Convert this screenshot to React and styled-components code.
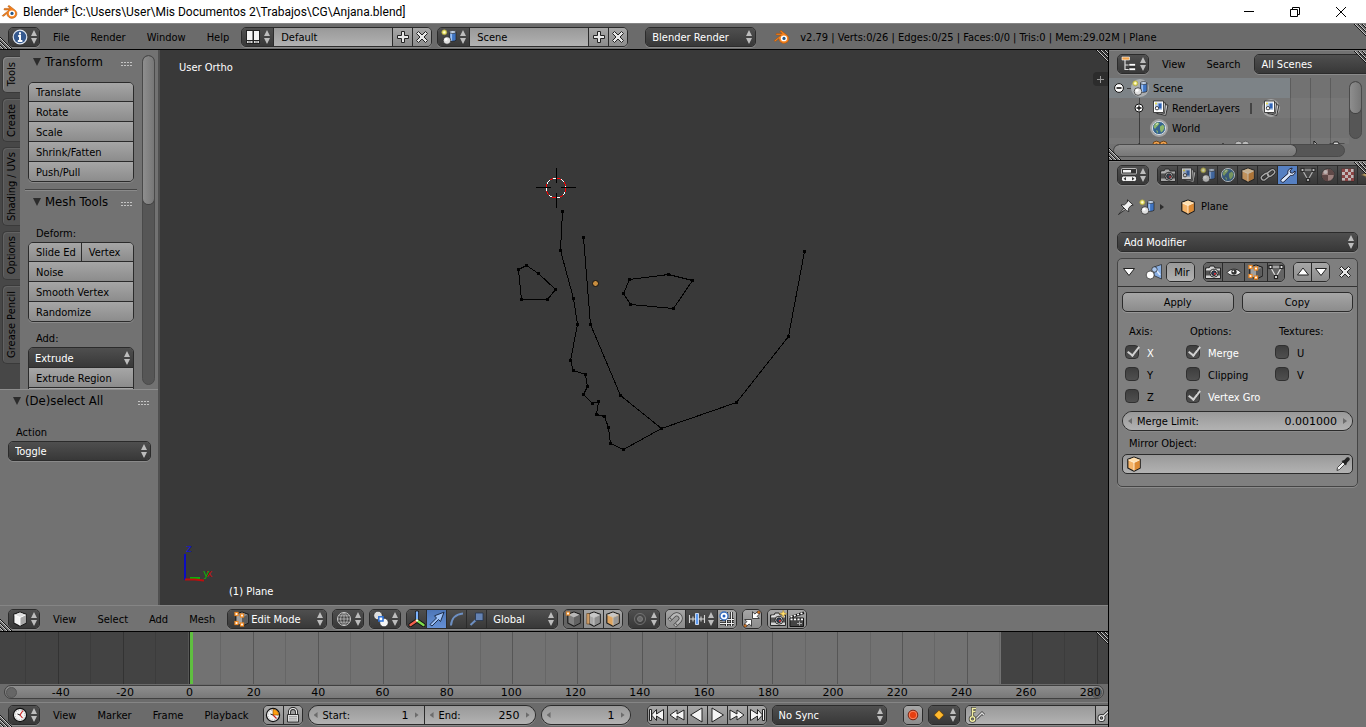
import React from 'react';
import styled, { createGlobalStyle, css } from 'styled-components';

const ui = '"DejaVu Sans Condensed", "DejaVu Sans", sans-serif';
const digits = '"DejaVu Sans", sans-serif';

const colors = {
  region: '#727272',
  header: '#6b6b6b',
  viewport: '#393939',
  outline: '#2b2b2b',
  active: '#5680c2',
};

const dark = css`
  background: linear-gradient(#4f4f4f, #383838);
  color: #fff;
`;

const light = css`
  background: linear-gradient(#a6a6a6, #8c8c8c);
  color: #000;
`;

const field = css`
  background: linear-gradient(#999, #b2b2b2);
  color: #000;
`;

const GlobalStyle = createGlobalStyle`
  * {
    box-sizing: border-box;
  }

  body {
    margin: 0;
    overflow: hidden;
    background: ${colors.region};
    font: 11px/16px ${ui};
    color: #000;
  }

  button, input, select {
    margin: 0;
    padding: 0;
    border: 0;
    border-radius: 0;
    background: none;
    font: inherit;
    color: inherit;
    outline: none;
  }
`;

const Svg = styled.svg`
  display: block;
  flex: none;
  overflow: visible;
  opacity: ${(p) => (p.$dim ? 0.7 : 1)};
`;

const cube = (front, side, top, edge = 'none') => (
  <g strokeLinejoin="round">
    <path d="M8 1 14.2 3.400V12L8 15.200 1.800 12V3.400z" fill={front} stroke="#1c1c1c" strokeWidth="1.200" />
    <path d="M8 1.600 13.600 3.700 8 6.400 2.400 3.700z" fill={top} />
    <path d="M13.600 3.700 8 6.400v8.200l5.600-2.900z" fill={side} />
    <path d="M2.400 3.900 8 6.500l5.600-2.600M8 6.500v8" fill="none" stroke={edge} strokeWidth=".9" />
  </g>
);

const handles = (points, color = '#f08a24') => points.map(([x, y]) => (
  <rect key={`${x}-${y}`} x={x - 1.5} y={y - 1.5} width="3" height="3" fill="#fff" stroke={color} strokeWidth="1.2" />
));

const layers = (
  <g stroke="#222" strokeWidth=".8">
    <path d="M6 4h9v10.5H6z" fill="#cfcfcf" transform="rotate(12 10 9)" />
    <path d="M4 2.5h9V13H4z" fill="#ddd" transform="rotate(5 8 8)" />
    <path d="M1.5 1h10v11.5h-10z" fill="#fff" />
    <path d="M3 2.5h7V10H3z" fill="#b8cdea" stroke="none" />
    <path d="M6.5 3.5h3v5h-3z" fill="#2f62b5" stroke="none" />
    <circle cx="5" cy="8.2" r="1.7" fill="#fff" />
    <circle cx="4" cy="3.5" r="1" fill="#f0e040" stroke="none" />
  </g>
);

const camera = (
  <g stroke="#181818" strokeWidth=".9">
    <path d="M.5 4H4l1-2h4l1 2h5.500v10.500H.5z" fill="#d2d2d2" />
    <path d="M1 6.500h14v5H1z" fill="#555" stroke="none" />
    <circle cx="9" cy="9.200" r="4" fill="#ececec" />
    <circle cx="9" cy="9.200" r="2.400" fill="#30405a" />
    <circle cx="10" cy="9.800" r="1.100" fill="#d33" stroke="none" />
    <path d="M2 5h2.500" stroke="#fff" />
  </g>
);

const clock = (slice) => (
  <g>
    <circle cx="8" cy="8" r="6.6" fill="#f4f4f4" stroke="#111" strokeWidth="1.2" />
    <circle cx="8" cy="8" r="4.9" fill="none" stroke="#aaa" strokeDasharray="1 1.57" />
    {slice && <path d="M8 8V2.200A5.800 5.800 0 0 1 13.800 8z" fill="#ff9f0f" stroke="#7a4300" strokeWidth=".6" />}
    <path d={slice ? 'M8 8l3.500 3.500' : 'M11 3.500 8 8l2.500 3'} stroke="#c22" strokeWidth="1.1" fill="none" />
    <path d="M8 8 5.500 7" stroke="#222" />
  </g>
);

const transport = (d) => <path d={d} fill="#f4f4f4" stroke="#222" strokeWidth="1" strokeLinejoin="round" />;

const glyphs = {
  blender: (
    <g>
      <path d="M.6 11.2 7.2 6H2.800c-1.200 0-1.200-1.600 0-1.600h5.400L6.400 3c-.9-.8.1-1.900 1.100-1.200l6 4.600a5 4.700 0 1 1-8.600 3.200l-2.800 2.300c-1 .8-2.400 0-1.500-.7z" fill="#f5821f" stroke="#a64c00" strokeWidth=".5" />
      <ellipse cx="9.900" cy="9.400" rx="3.100" ry="2.800" fill="#fff" />
      <circle cx="10" cy="9.400" r="1.600" fill="#265787" />
    </g>
  ),
  info: (
    <g>
      <circle cx="8" cy="8" r="6.800" fill="#35598f" stroke="#dfe7f2" strokeWidth="1.200" />
      <path d="M8 3.200v2.200M6.200 7H8v5M5.800 12h4.600" stroke="#fff" strokeWidth="2" fill="none" />
    </g>
  ),
  layout: (
    <g>
      <path d="M1 1h14v14H1z" fill="#222" />
      <path d="M2 2h5.500v9H2zM9 2h5v9H9z" fill="#f4f4f4" />
      <path d="M2 12h5.500v2H2zM9 12h5v2H9z" fill="#d8d8d8" />
      <path d="M3 13h3M10 13h3" stroke="#555" strokeWidth=".8" />
    </g>
  ),
  scene: (
    <g stroke="#222" strokeWidth=".7">
      <path d="M8.500 3v8.500c1.500 1.200 4.700 1 6.500-.2V3z" fill="#3f75c4" />
      <path d="M10.200 4v8" stroke="#9cc0f2" strokeWidth="1.800" />
      <ellipse cx="11.700" cy="3" rx="3.300" ry="1.400" fill="#cfe0f7" />
      <circle cx="6" cy="11.500" r="3.800" fill="#e0e0e0" />
      <circle cx="5" cy="10.300" r="1.500" fill="#fff" stroke="none" />
      <circle cx="3.300" cy="3.300" r="2.500" fill="#e9e36a" stroke="#a49c40" />
      <circle cx="3.300" cy="3.300" r="1.100" fill="#fffde0" stroke="none" />
    </g>
  ),
  plus: <path d="M6.500 2.500h3v4h4v3h-4v4h-3v-4h-4v-3h4z" fill="#e8e8e8" stroke="#222" />,
  close: <path d="m2.500 4.500 2-2L8 6l3.500-3.500 2 2L10 8l3.500 3.500-2 2L8 10l-3.500 3.500-2-2L6 8z" fill="#e8e8e8" stroke="#222" />,
  outliner: (
    <g>
      <path d="M4 4v9.500h5M4 9h5" stroke="#ddd" strokeWidth="1.200" fill="none" />
      <path d="M1 1h7.500v3H1z" fill="#f0a24a" stroke="#fff" strokeWidth=".6" />
      <path d="M8 7.500h6.500V10H8zM8 12h6.500v2.500H8z" fill="#fff" stroke="#111" strokeWidth=".5" />
    </g>
  ),
  properties: (
    <g fill="#f2f2f2" stroke="#111" strokeWidth=".7">
      <rect x=".5" y="1.500" width="15" height="5.500" rx="1" fill="#333" stroke="#eee" />
      <path d="M2 3h8v2.500H2z" stroke="none" />
      <rect x=".5" y="9" width="15" height="5.500" rx="2" />
      <path d="m5 10-2.500 1.700L5 13.400zM11 10l2.500 1.700-2.500 1.700z" fill="#333" stroke="none" />
    </g>
  ),
  layers,
  camera,
  world: (
    <g>
      <circle cx="8" cy="8" r="6.600" fill="#35648f" stroke="#d5dde6" strokeWidth="1" />
      <path d="M4 3.500c2-1.500 4-1 4.500 0L7 5.500 5.500 7 4 9 2.500 7zM9 6.500l3-2 1.700 3L12 11l-2 1.500L9 9.500zM5 10l2 1-.5 2.500z" fill="#8db76c" />
      <path d="M5 4.500 7 3.500" stroke="#dfeccf" />
    </g>
  ),
  object: cube('#f5b469', '#dc8a34', '#ffdfae', '#fff3df'),
  view3d: cube('#f4f4f4', '#a8a8a8', '#dedede', '#fff'),
  vertex: (
    <g>
      {cube('#808080', '#626262', '#b8b8b8')}
      {handles([[2, 2.5]], '#e08a30')}
    </g>
  ),
  edge: (
    <g>
      {cube('#a8a8a8', '#8f8f8f', '#c8c8c8', '#c8c8c8')}
      <path d="M.8 2.500h2.600v10.500H.8z" fill="#d9a46a" stroke="#694a28" strokeWidth=".7" />
    </g>
  ),
  face: cube('#e0a55f', '#979797', '#c8c8c8', '#d5c3a8'),
  editmode: (
    <g>
      {cube('#a0a0a0', '#5c5c5c', '#8a8a8a')}
      {handles([[2.5, 3], [8, 4.5], [2.5, 12], [8, 13.5]])}
    </g>
  ),
  constraint: (
    <g fill="none" stroke="#222" strokeWidth="3">
      <rect x="1" y="7.500" width="8" height="4.500" rx="2.200" transform="rotate(-38 5 9.800)" />
      <rect x="7" y="3.800" width="8" height="4.500" rx="2.200" transform="rotate(-38 11 6)" />
      <g stroke="#d5d5d5" strokeWidth="1.300">
        <rect x="1" y="7.500" width="8" height="4.500" rx="2.200" transform="rotate(-38 5 9.800)" />
        <rect x="7" y="3.800" width="8" height="4.500" rx="2.200" transform="rotate(-38 11 6)" />
      </g>
    </g>
  ),
  wrench: (
    <path d="M1.200 12.500 8 6.500c-.8-2.500 1-5.300 4.200-5.300L10 4l.6 1.800 2 .3L15 4c.5 3-2 5-4.500 4.400L4 14.800c-1.700 1.300-4-.6-2.800-2.300z" fill="#dbe8fc" stroke="#112" strokeWidth=".9" />
  ),
  mesh: (
    <g>
      <path d="M2.500 3h11L8 13z" fill="none" stroke="#ddd" strokeWidth="1.200" />
      {handles([[2.5, 3], [13.5, 3], [8, 13]], '#222')}
    </g>
  ),
  material: (
    <g>
      <circle cx="8" cy="8" r="6.300" fill="#c29a96" stroke="#222" strokeWidth=".8" />
      <path d="M8 1.700A6.300 6.300 0 0 1 14.300 8H8zM8 8v6.300A6.300 6.300 0 0 1 1.700 8z" fill="#6b4a48" />
      <circle cx="5.500" cy="5" r="2" fill="#eee0de" />
    </g>
  ),
  texture: (
    <g>
      <path d="M1.500 1.500h12.500V14H1.500z" fill="#f3e6e6" stroke="#3a1414" strokeWidth=".7" />
      <path d="M2 2h3v3H2zM8 2h3v3H8zM5 5h3v3H5zM11 5h3v3h-3zM2 8h3v3H2zM8 8h3v3H8zM5 11h3v3H5zM11 11h3v3h-3z" fill="#a84444" />
    </g>
  ),
  particles: <path d="m8 1 1.500 5L14 8 9.500 9.500 8 14 6.500 9.500 2 8l4.500-2z" fill="#e6c473" stroke="#543" strokeWidth=".6" />,
  pin: (
    <g stroke="#222" strokeWidth=".9" strokeLinejoin="round">
      <path d="m.5 15.500 6-7L8 10z" fill="#ddd" />
      <path d="M9.500.8 15.200 6l-2.200.6-2.500 2.900.3 3.200L8.500 11.500 3 6l3.500-.2 2.900-2.700z" fill="#f2f2f2" />
    </g>
  ),
  mirror: (
    <g stroke="#222" strokeWidth=".7">
      <path d="M8 3 15.500.5v14.500L8 11.500z" fill="#88aee2" />
      <path d="m9.500 5 4.500 6" stroke="#dbe8fb" strokeWidth="1.500" />
      <circle cx="8.500" cy="5.500" r="2.700" fill="#a8c4ea" />
      <circle cx="4.200" cy="11" r="4" fill="#fff" />
    </g>
  ),
  eye: (
    <g>
      <path d="M1.200 8.500C4 4 12 4 14.800 8.500 12 12.500 4 12.500 1.200 8.500z" fill="#f4f4f4" stroke="#222" strokeWidth=".9" />
      <circle cx="8" cy="8" r="2.700" fill="#333" />
      <circle cx="7.300" cy="7.300" r=".9" fill="#fff" />
    </g>
  ),
  up: <path d="M8 4 13.500 11h-11z" fill="#fff" stroke="#222" />,
  down: <path d="M8 11.500 13.500 4.500h-11z" fill="#fff" stroke="#222" />,
  dropper: (
    <g>
      <path d="m2 14.500.5-3L8 6l2 2-5.500 5.500z" fill="#f2f2f2" stroke="#222" strokeWidth=".8" />
      <path d="M6.500 5 9.300 4l2.400-2.400c1.600-1.400 4.100.8 2.700 2.600L12 6.700 11 9.500z" fill="#222" />
    </g>
  ),
  sphere: (
    <g fill="none" stroke="#c8c8c8">
      <circle cx="8" cy="8" r="6.500" />
      <path d="M1.500 8h13M8 1.500v13M8 1.500c-4.500 3-4.500 10 0 13M8 1.500c4.500 3 4.500 10 0 13M3 4.800h10M3 11.200h10" strokeWidth=".7" />
    </g>
  ),
  pivot: (
    <g>
      <circle cx="5" cy="4.500" r="4.300" fill="#dedede" stroke="#222" strokeWidth=".7" />
      <circle cx="11" cy="11.500" r="4.300" fill="#f5f5f5" stroke="#222" strokeWidth=".7" />
      <rect x="5.800" y="5.800" width="4.200" height="4.200" fill="#fff" stroke="#2b6fd6" strokeWidth="1.500" />
    </g>
  ),
  manipulator: (
    <g strokeLinecap="round">
      <path d="M8 9V1.500M8 9.500 1.500 14M8 9.500l6.500 4.500" stroke="#111" strokeWidth="4" />
      <path d="M8 9V1.500" stroke="#7db4ff" strokeWidth="2.400" />
      <path d="M8 9.500 1.500 14" stroke="#f2604c" strokeWidth="2.400" />
      <path d="M8 9.500l6.500 4.500" stroke="#7edc4c" strokeWidth="2.400" />
      <circle cx="8" cy="9.500" r="1.100" fill="#fff" />
    </g>
  ),
  translate: <path d="M1 13.500 7.500 7 5.500 4.800 15 1.200 11.500 10.500 9.500 8.500 3 15z" fill="#9dc1f7" stroke="#13213a" strokeWidth=".9" />,
  rotate: <path d="M2 14.500C2.500 7.500 7 3 14 2.500" fill="none" stroke="#6d8fc2" strokeWidth="2" />,
  scale: (
    <g>
      <path d="M1.500 14 8 8" stroke="#6d8fc2" strokeWidth="2" />
      <path d="M6.500 2H14v7.500H6.500z" fill="#6583b3" stroke="#25334c" strokeWidth=".8" />
    </g>
  ),
  proportional: (
    <g fill="none" stroke="#7d7d7d">
      <circle cx="8" cy="8" r="5.500" strokeWidth=".8" />
      <circle cx="8" cy="8" r="2.500" fill="#6a6a6a" />
    </g>
  ),
  magnet: (
    <g fill="none" transform="rotate(45 8 8)">
      <path d="M4 14V7a4 4 0 0 1 8 0v7" stroke="#444" strokeWidth="4" />
      <path d="M4 13.500V7a4 4 0 0 1 8 0v6.500" stroke="#b8b8b8" strokeWidth="2.600" />
      <path d="M2.700 11.500h2.600M10.700 11.500h2.600" stroke="#555" />
    </g>
  ),
  increment: (
    <g>
      <path d="M.5 4v8M4 5.500v5M12 5.500v5M15.500 4v8M1 8h14" stroke="#d5d5d5" strokeWidth="1.100" />
      <path d="M6.500 2.500h3v11h-3z" fill="#5d9bf2" stroke="#e5efff" strokeWidth=".8" />
    </g>
  ),
  snapgrid: (
    <g fill="none">
      <path d="M7.500 1v14M12.500 1v14M1 8.500h14M1 12.500h14" stroke="#222" strokeWidth="2.600" />
      <path d="M7.500 1v14M12.500 1v14M1 8.500h14M1 12.500h14" stroke="#eee" strokeWidth="1" />
      <circle cx="5" cy="5" r="4" fill="#fff" stroke="#3a6fbd" strokeWidth="1.300" />
      <circle cx="5" cy="5" r="1.500" fill="#2360c0" />
    </g>
  ),
  merge: (
    <g>
      <path d="M8.500.8v6.700h6.700l-2-2.200 2.400-2.400-2.200-2.200L11 3.100z" fill="#fff" stroke="#222" strokeWidth=".8" />
      <path d="M7.500 15.200V8.500H.8l2 2.200-2.400 2.400 2.200 2.200L5 12.900z" fill="#fff" stroke="#222" strokeWidth=".8" />
      <circle cx="14.800" cy="1.200" r="1.500" fill="#d0781e" stroke="#422" strokeWidth=".5" />
      <circle cx="1.200" cy="14.800" r="1.500" fill="#d0781e" stroke="#422" strokeWidth=".5" />
    </g>
  ),
  renderView: (
    <g>
      {camera}
      <path d="m13.200-.8 1 2.600 2.600 1-2.600 1-1 2.700-1-2.700-2.700-1 2.700-1z" fill="#ffe070" stroke="#a67a10" strokeWidth=".4" />
    </g>
  ),
  clapper: (
    <g>
      <path d="M1 7h13.500v8.500H1z" fill="#444" stroke="#111" />
      <path d="M.5 5.200 14.500.5l.8 2.500L1.500 7.500z" fill="#111" />
      <path d="M1.500 5.900 14.800 1.700M1.500 8.400h12.500" stroke="#fff" strokeWidth="1.700" strokeDasharray="2 1.500" />
      <path d="M8 12.500h5M10.500 10.500v4" stroke="#aaa" />
    </g>
  ),
  clock: clock(false),
  range: clock(true),
  lock: (
    <g stroke="#222" strokeWidth=".9">
      <path d="M4.500 8V5a3.500 3.500 0 0 1 7 0v3" fill="none" stroke="#222" strokeWidth="3" />
      <path d="M4.500 8V5a3.500 3.500 0 0 1 7 0v3" fill="none" stroke="#eee" strokeWidth="1.200" />
      <path d="M2.500 7.500h11V15h-11z" fill="#e0e0e0" />
      <path d="M4 9.500h8M4 11.200h8M4 13h8" stroke="#888" strokeWidth=".7" />
    </g>
  ),
  first: transport('M.5 2.500h2V8l5-5.500V7l7-4.500v11L7.500 9v4.500l-5-5.500v5.500h-2z'),
  rewind: transport('M1 8l7-5v4l7-4v10L8 9v4z'),
  back: transport('M1.500 8 13 1v14z'),
  play: transport('M14.500 8 3 1v14z'),
  forward: transport('M15 8 8 3v4L1 3v10l7-4v4z'),
  last: transport('M15.500 2.500h-2V8l-5-5.500V7l-7-4.500v11L8.500 9v4.500l5-5.500v5.500h2z'),
  record: (
    <g>
      <circle cx="8" cy="8" r="4.800" fill="#e63e10" stroke="#702010" />
      <circle cx="8" cy="8" r="3.800" fill="none" stroke="#ff9a78" strokeWidth=".8" />
    </g>
  ),
  keyframe: <path d="m8 3.200 4.800 4.800L8 12.800 3.200 8z" fill="#ffb92e" stroke="#6b4300" strokeWidth=".8" />,
  keyset: (
    <g fill="none">
      <path d="M4.500 9V1.500H8M5 4.500h2.500" stroke="#444" strokeWidth="3" />
      <path d="m8.500 11.500 5.500-5.500 2 2" stroke="#444" strokeWidth="3" />
      <circle cx="4.500" cy="12" r="2.200" stroke="#444" strokeWidth="3.200" />
      <path d="m8.500 11.500 5.500-5.500 2 2" stroke="#ddd" strokeWidth="1.300" />
      <path d="M4.500 9V1.500H8M5 4.500h2.500" stroke="#f1eda0" strokeWidth="1.500" />
      <circle cx="4.500" cy="12" r="2.200" stroke="#f1eda0" strokeWidth="1.500" />
    </g>
  ),
  key: (
    <g fill="none">
      <path d="m6 9.500 8-7.500" stroke="#333" strokeWidth="3" />
      <circle cx="4.500" cy="11" r="2.400" stroke="#333" strokeWidth="3.200" />
      <path d="m6 9.500 8-7.500" stroke="#eee" strokeWidth="1.300" />
      <circle cx="4.500" cy="11" r="2.400" stroke="#eee" strokeWidth="1.400" />
    </g>
  ),
  armature: (
    <g fill="#f2a24e" stroke="#5a3208" strokeWidth=".8">
      <circle cx="4.500" cy="5" r="3.800" />
      <circle cx="11.500" cy="5" r="3.800" />
      <path d="M3 8h10v6H3z" />
      <circle cx="4.500" cy="5" r="1.300" fill="#fff" />
      <circle cx="11.500" cy="5" r="1.300" fill="#fff" />
    </g>
  ),
  cameraData: (
    <g fill="#bbb" stroke="#555" strokeWidth=".8">
      <circle cx="4.500" cy="5" r="3.800" />
      <circle cx="11.500" cy="5" r="3.800" />
      <path d="M3 8h10v6H3z" />
    </g>
  ),
  expand: (
    <g>
      <circle cx="8" cy="8" r="4" fill="#fff" stroke="#111" />
      <path d="M5.500 8h5M8 5.500v5" stroke="#111" strokeWidth="1.300" />
    </g>
  ),
  collapse: (
    <g>
      <circle cx="8" cy="8" r="4.400" fill="#fff" stroke="#111" />
      <path d="M5.500 8h5" stroke="#111" strokeWidth="1.600" />
    </g>
  ),
  cursor: <path d="M5 1v12l3-3h5z" fill="#fff" stroke="#111" />,
};

const Icon = ({ name, size = 16, dim }) => (
  <Svg width={size} height={size} viewBox="0 0 16 16" $dim={dim} aria-hidden="true">
    {glyphs[name]}
  </Svg>
);

const Arrows = () => (
  <Svg width="6" height="14" viewBox="0 0 6 14" aria-hidden="true">
    <path d="M3 0 6 6H0zM3 14 6 8H0z" fill="#bdbdbd" />
  </Svg>
);

const Triangle = styled.span`
  width: 0;
  height: 0;
  border: 4px solid transparent;
  border-top: 8px solid #2c2c2c;
  border-bottom: 0;
`;

const CornerSvg = styled.svg`
  position: absolute;
  z-index: 2;
  ${(p) => (p.$at === 'bottom' ? 'left: 0; bottom: 0;' : 'right: 0; top: 0;')}
`;

const Corner = ({ at }) => (
  <CornerSvg $at={at} width="12" height="12" viewBox="0 0 12 12" aria-hidden="true">
    <g transform={at === 'bottom' ? 'rotate(180 6 6)' : undefined}>
      <path d="M0 0 12 12M4 0l8 8M8 0l4 4" stroke="#111" />
      <path d="M1 0 12 11M5 0l7 7M9 0l3 3" stroke="#c8c8c8" />
    </g>
  </CornerSvg>
);

// Window frame

const Window = styled.div`
  display: flex;
  flex-direction: column;
  height: 100vh;
  overflow: hidden;
`;

const TitleBar = styled.header`
  display: flex;
  align-items: center;
  height: 23px;
  padding-left: 2px;
  background: #fff;
  font: 12px/20px Roboto, sans-serif;
`;

const TitleText = styled.h1`
  flex: 1;
  margin: 0 0 0 5px;
  font: inherit;
`;

const WindowButton = styled.button`
  display: flex;
  flex: none;
  align-items: center;
  justify-content: center;
  width: 46px;
  height: 20px;
  margin-right: ${(p) => (p.$last ? 2 : 0)}px;
`;

const Body = styled.div`
  display: flex;
  flex: 1;
  min-height: 0;
`;

const MainColumn = styled.div`
  display: flex;
  flex: 1;
  flex-direction: column;
  min-width: 0;
`;

const SideColumn = styled.aside`
  display: flex;
  flex: none;
  flex-direction: column;
  width: 258px;
  border-left: 1px solid #000;
  background: ${colors.region};
`;

const Bar = styled.div`
  position: relative;
  display: flex;
  flex: none;
  align-items: center;
  height: ${(p) => p.$height || 26}px;
  padding-left: 8px;
  overflow: hidden;
  border-top: 1px solid #858585;
  border-bottom: ${(p) => (p.$line ? '1px solid #000' : 0)};
  background: ${(p) => (p.$shade ? colors.header : colors.region)};
  white-space: nowrap;
`;

const Menus = styled.nav`
  display: flex;
  gap: 21px;
  margin: 0 12px 0 13px;
`;

const MenuButton = styled.button`
  height: 20px;
  padding-top: 2px;
`;

const Status = styled.span`
  padding-top: 2px;
`;

const Gap = styled.span`
  flex: none;
  width: ${(p) => p.$size || 5}px;
`;

// Widgets

const Group = styled.div`
  display: flex;
  flex: none;
  overflow: hidden;
  height: 20px;
  border: 1px solid ${colors.outline};
  border-radius: ${(p) => (p.$round ? 10 : 5)}px;
  box-shadow: 0 1px 0 #8a8a8a;

  > * + * {
    border-left: 1px solid ${colors.outline};
  }
`;

const IconButton = styled.button`
  display: flex;
  flex: none;
  align-items: center;
  justify-content: center;
  gap: 3px;
  width: ${(p) => p.$width || 20}px;
  ${(p) => (p.$dark ? dark : light)}
  ${(p) => p.$active && 'background: linear-gradient(#4d76b8, #6590d4);'}
  ${(p) => p.$pressed && 'background: #646464;'}

  &:first-child, &:last-child {
    width: ${(p) => (p.$width || 20) - 1}px;
  }

  &:only-child {
    width: ${(p) => (p.$width || 20) - 2}px;
  }
`;

const EditorButton = ({ icon, label }) => (
  <Group>
    <IconButton $dark $width={32} aria-label={label}>
      <Icon name={icon} />
      <Arrows />
    </IconButton>
  </Group>
);

const SelectFrame = styled.label`
  position: relative;
  display: flex;
  align-items: center;
  width: ${(p) => (p.$width ? `${p.$width}px` : '100%')};
  flex: none;
  padding: 0 3px 0 6px;
  ${dark}

  select {
    flex: 1;
    min-width: 0;
    height: 18px;
    appearance: none;
    padding-top: 2px;
    padding-left: ${(p) => p.$indent || 0}px;
  }

  option {
    color: #000;
  }
`;

const Select = ({
  label, value, icon, width, indent
}) => (
  <SelectFrame $width={width} $indent={indent}>
    {icon && <Icon name={icon} />}
    <select aria-label={label} defaultValue={value}>
      <option>{value}</option>
    </select>
    <Arrows />
  </SelectFrame>
);

const TextInput = styled.input`
  width: ${(p) => p.$width}px;
  padding: 2px 0 0 7px;
  ${field}
`;

const NumberFrame = styled.label`
  display: flex;
  flex: none;
  align-items: center;
  width: ${(p) => (p.$width ? `${p.$width}px` : '100%')};
  padding: 0 5px;
  ${field}

  input {
    flex: 1;
    min-width: 0;
    height: 18px;
    padding-top: 1px;
    margin-right: 6px;
    font-family: ${digits};
    text-align: right;
  }
`;

const Nudge = styled.span`
  flex: none;
  width: 4px;
  height: 6px;
  margin-right: ${(p) => (p.$right ? 0 : 5)}px;
  background: ${(p) => (p.$strong ? '#2c2c2c' : '#6c6c6c')};
  clip-path: ${(p) => (p.$right ? 'polygon(0 0, 100% 50%, 0 100%)' : 'polygon(100% 0, 0 50%, 100% 100%)')};
`;

const NumberLabel = styled.span`
  padding-top: 1px;
`;

const NumberField = ({
  label, value, width, hideLabel
}) => (
  <NumberFrame $width={width}>
    <Nudge />
    {!hideLabel && <NumberLabel>{label}</NumberLabel>}
    <input aria-label={label} defaultValue={value} />
    <Nudge $right />
  </NumberFrame>
);

const Scrollbar = styled.div`
  flex: none;
  overflow: hidden;
  border: 1px solid #4a4a4a;
  border-radius: 7px;
  background: #565656;
  ${(p) => (p.$horizontal ? 'height: 13px;' : 'width: 13px;')}

  &::before {
    content: '';
    display: block;
    border-radius: 6px;
    box-shadow: 0 0 0 1px #404040;
    ${(p) => (p.$horizontal
    ? `width: ${p.$thumb}%; height: 100%; background: linear-gradient(#8e8e8e, #777);`
    : `height: ${p.$thumb}%; width: 100%; background: linear-gradient(90deg, #8e8e8e, #777);`)}
  }
`;

// Tool shelf

const Shelf = styled.div`
  display: flex;
  flex: none;
  flex-direction: column;
  width: 160px;
  border-right: 2px solid #505050;
  background: ${colors.region};
`;

const ShelfTop = styled.div`
  display: flex;
  flex: 339 1 0;
  min-height: 0;
  overflow: hidden;
`;

const Tabs = styled.div`
  display: flex;
  flex: none;
  flex-direction: column;
  gap: 5px;
  width: 20px;
  padding: 6px 0 0 2px;
  background: #474747;
`;

const Tab = styled.button`
  height: ${(p) => p.$length}px;
  border: 1px solid #3a3a3a;
  border-right: 0;
  border-radius: 5px 0 0 5px;
  background: ${(p) => (p.$active ? colors.region : '#535353')};
  box-shadow: inset 1px 1px 0 ${(p) => (p.$active ? '#8a8a8a' : '#626262')};
  white-space: nowrap;

  span {
    display: block;
    padding-right: 1px;
    writing-mode: vertical-rl;
    transform: rotate(180deg);
  }
`;

const Panels = styled.div`
  flex: 1;
  min-width: 0;
  padding: 4px 5px 0;
`;

const Panel = styled.section`
  height: ${(p) => (p.$height ? `${p.$height}px` : 'auto')};
  padding: 0 3px;

  & + & {
    border-top: 1px solid #444;
    box-shadow: inset 0 1px 0 #8a8a8a;
    padding-top: 4px;
  }
`;

const PanelHeader = styled.h2`
  display: flex;
  align-items: center;
  gap: 4px;
  height: 16px;
  margin: 0 2px 0 5px;
  font: 13px/16px ${ui};
  white-space: nowrap;
`;

const Grip = styled.span`
  width: 12px;
  height: 5px;
  margin: 4px 0 0 auto;
  background: conic-gradient(from 90deg at 1px 1px, transparent 75%, #c4c4c4 0) 0 0 / 3px 3px;
`;

const Caption = styled.p`
  margin: ${(p) => p.$top || 0}px 0 0 8px;
  padding-top: 1px;
`;

const Stack = styled.div`
  margin-top: ${(p) => p.$top || 0}px;
  overflow: hidden;
  border: 1px solid ${colors.outline};
  border-radius: 5px;
  box-shadow: 0 1px 0 #8a8a8a;

  > * + * {
    border-top: 1px solid ${colors.outline};
  }

  > label {
    height: 19px;
  }
`;

const ToolButton = styled.button`
  display: block;
  width: 100%;
  height: ${(p) => (p.$first ? 18 : 20)}px;
  padding: 2px 0 0 7px;
  overflow: hidden;
  text-align: left;
  white-space: nowrap;
  ${light}
`;

const Split = styled.div`
  display: flex;

  > * + * {
    border-left: 1px solid ${colors.outline};
  }
`;

const ShelfBar = styled(Scrollbar)`
  height: 330px;
  margin: 5px 3px 0 0;
`;

const Operator = styled.section`
  flex: 212 1 0;
  padding: 3px 7px 0 8px;
  border-top: 1px solid #8e8e8e;
`;

// 3D view

const ViewRow = styled.div`
  display: flex;
  flex: 1;
  min-height: 0;
`;

const Viewport = styled.main`
  position: relative;
  flex: 1;
  overflow: hidden;
  background: ${colors.viewport};
  color: #fff;
`;

const Overlay = styled.span`
  position: absolute;
  ${(p) => (p.$bottom ? 'left: 69px; bottom: 5px;' : 'left: 19px; top: 10px;')}
`;

const AxisGizmo = styled.svg`
  position: absolute;
  left: 20px;
  bottom: 19px;
  font: 11px ${digits};
`;

const RegionToggle = styled.button`
  position: absolute;
  right: 0;
  top: 22px;
  display: flex;
  align-items: center;
  justify-content: center;
  width: 15px;
  height: 14px;
  border-radius: 4px 0 0 4px;
  background: #2c2c2c;
`;

const profile = [
  [402, 161], [400, 200], [413, 248], [417, 274], [410, 310], [413, 320], [425, 324], [427, 336],
  [423, 344], [432, 353], [438, 351], [436, 364], [444, 366], [448, 377], [450, 393], [463, 399],
  [501, 378], [576, 352], [628, 286], [644, 201],
];
const jaw = [[423, 187], [430, 274], [460, 345], [501, 378]];
const ear = [[358, 219], [366, 215], [378, 223], [395, 239], [387, 249], [361, 249]];
const eye = [[469, 229], [508, 224], [532, 230], [513, 258], [470, 254], [463, 243]];

const Mesh = () => (
  <svg width="948" height="555" shapeRendering="crispEdges" role="img" aria-label="Plane mesh">
    <g fill="none" stroke="#000" transform="translate(.5 .5)">
      <polyline points={profile.join(' ')} />
      <polyline points={jaw.join(' ')} />
      <polygon points={ear.join(' ')} />
      <polygon points={eye.join(' ')} />
    </g>
    {[...profile, ...jaw, ...ear, ...eye].map(([x, y], i) => (
      <rect key={i} x={x - 1} y={y - 1} width="3" height="3" />
    ))}
    <circle cx="435.5" cy="233.5" r="3" fill="#c88d3f" stroke="#111" shapeRendering="auto" />
    <circle cx="396" cy="138" r="10" fill="none" stroke="#fff" />
    <circle cx="396" cy="138" r="10" fill="none" stroke="#f00" strokeDasharray="4 4" />
    <path d="M376 137.5h15M401 137.5h15M396.5 118v15M396.5 143v15" stroke="#000" />
  </svg>
);

// Timeline

const Timeline = styled.section`
  position: relative;
  flex: none;
  height: 70px;
  overflow: hidden;
  background: #6b6b6b;
`;

const Track = styled.div`
  position: relative;
  height: 52px;
  background: linear-gradient(90deg, #434343 17%, #727272 17%, #727272 90.3%, #434343 90.3%);
`;

const Tick = styled.span`
  position: absolute;
  top: 0;
  bottom: 0;
  width: 1px;
  background: ${(p) => (p.$major ? 'rgba(0, 0, 0, .24)' : 'rgba(0, 0, 0, .1)')};
`;

const Playhead = styled(Tick)`
  width: 3px;
  background: #5fbf40;
  box-shadow: -1px 0 0 #222;
`;

const Ruler = styled.div`
  position: relative;
  height: 14px;
  margin: 1px 4px 0;
  border: 1px solid #404040;
  border-radius: 7px;
  background: linear-gradient(#8e8e8e, #787878);

  &::before, &::after {
    content: '';
    position: absolute;
    top: 1px;
    left: 1px;
    width: 9px;
    height: 9px;
    border: 1px solid #555;
    border-radius: 50%;
    background: #666;
  }

  &::after {
    right: 1px;
    left: auto;
  }
`;

const RulerLabel = styled.span`
  position: absolute;
  z-index: 1;
  top: -1px;
  font-family: ${digits};
  transform: translateX(-50%);
`;

const majorFrames = Array.from({ length: 17 }, (_, i) => (i - 2) * 20);
const allFrames = Array.from({ length: 34 }, (_, i) => (i - 5) * 10);
const framePercent = (frame) => `${16.95 + frame * 0.293}%`;
const labelPercent = (frame) => `${16.8 + frame * 0.293}%`;

// Outliner

const Outliner = styled.section`
  position: relative;
  flex: none;
  height: 85px;
  padding-top: 2px;
  border-bottom: 1px solid #000;
`;

const OutlinerBody = styled.div`
  display: flex;
  height: 66px;
`;

const Tree = styled.ul`
  flex: 1;
  margin: 0;
  padding: 0;
  overflow: hidden;
  list-style: none;
  background:
    linear-gradient(#5c5c5c, #5c5c5c) 181px 0 / 1px 100% no-repeat,
    linear-gradient(#5c5c5c, #5c5c5c) 201px 0 / 1px 100% no-repeat,
    linear-gradient(#5c5c5c, #5c5c5c) 221px 0 / 1px 100% no-repeat,
    linear-gradient(#3c3c3c, #3c3c3c) 30px 20px / 1px 100% no-repeat;
`;

const TreeRow = styled.li`
  display: flex;
  align-items: center;
  width: ${(p) => (p.$selected ? '181px' : '100%')};
  height: 20px;
  padding-left: ${(p) => p.$indent}px;
  background: ${(p) => (p.$selected ? '#7d8387' : p.$odd ? 'rgba(255, 255, 255, .04)' : 'none')};
`;

const TreeName = styled.span`
  padding: 1px 0 0 4px;
`;

const Branch = styled.span`
  width: 4px;
  height: 1px;
  background: #3c3c3c;
`;

const Halo = styled.span`
  padding: 1px;
  border-radius: 50%;
  background: rgba(255, 255, 255, .35);
`;

const Pipe = styled.span`
  width: 2px;
  height: 11px;
  margin: 0 10px;
  background: #444;
`;

const Restrict = styled.span`
  display: flex;
  gap: 4px;
  margin: 0 4px 0 auto;
`;

const OutlinerBar = styled(Scrollbar)`
  height: 58px;
  margin: 3px 4px 0 0;
`;

const OutlinerFoot = styled(Scrollbar)`
  margin: 0 21px 0 4px;
`;

// Properties

const PropertyTab = styled(IconButton)`
  ${dark}
  ${(p) => p.$active && `background: ${colors.active};`}
`;

const Context = styled.div`
  display: flex;
  align-items: center;
  height: 39px;
  gap: 5px;
  padding: 1px 9px 0;
`;

const PropertyBody = styled.div`
  padding: 6px 8px 0;
`;

const Card = styled.section`
  margin-top: 6px;
  border: 1px solid #444;
  border-radius: 5px;
  background: #7f7f7f;
  box-shadow: 0 1px 0 #8a8a8a;
`;

const CardHeader = styled.header`
  display: flex;
  align-items: center;
  height: 28px;
  padding: 0 3px 1px;
  border-bottom: 1px solid #333;
`;

const PlainButton = styled.button`
  flex: none;
`;

const ModifierName = styled(TextInput)`
  padding: 2px 0 0 3px;
  text-align: center;
`;

const CardBody = styled.div`
  padding: 5px 4px 12px;
`;

const ButtonRow = styled.div`
  display: grid;
  grid-template-columns: 1fr 1fr;
  gap: 8px;
`;

const PushButton = styled.button`
  height: 20px;
  padding-top: 2px;
  border: 1px solid ${colors.outline};
  border-radius: 5px;
  box-shadow: 0 1px 0 #989898;
  ${light}
`;

const Options = styled.div`
  display: grid;
  grid-template-columns: 61px 89px 1fr;
  margin: 11px 0 3px 3px;
`;

const OptionTitle = styled.div`
  height: 19px;
  padding: 1px 0 0 4px;
`;

const Check = styled.label`
  display: flex;
  align-items: center;
  gap: 8px;
  height: 22px;
  padding-top: 1px;
  color: ${(p) => (p.$on ? '#fff' : '#000')};
  white-space: nowrap;

  input {
    position: relative;
    flex: none;
    width: 14px;
    height: 14px;
    margin-top: -3px;
    appearance: none;
    border: 1px solid #303030;
    border-radius: 4px;
    background: linear-gradient(#3e3e3e, #4f4f4f);
  }

  input:checked::after {
    content: '';
    position: absolute;
    left: 4px;
    top: -2px;
    width: 5px;
    height: 10px;
    border: solid #d0d0d0;
    border-width: 0 2px 2px 0;
    transform: rotate(38deg);
  }
`;

const CheckBox = ({ label, on }) => (
  <Check $on={on}>
    <input type="checkbox" defaultChecked={on} />
    {label}
  </Check>
);

const ObjectField = styled.div`
  display: flex;
  align-items: center;
  height: 20px;
  padding: 0 1px 0 3px;
  border: 1px solid ${colors.outline};
  border-radius: 5px;
  ${field}

  input {
    flex: 1;
    min-width: 0;
  }
`;

const KeyingSet = styled.label`
  display: flex;
  flex: none;
  align-items: center;
  width: 129px;
  padding-left: 2px;
  ${field}

  input {
    flex: 1;
    min-width: 0;
  }
`;

const MirrorLabel = styled.label`
  display: block;
  margin: 5px 0 2px 7px;
`;

const tabs = [['Tools', 37], ['Create', 44], ['Shading / UVs', 79], ['Options', 49], ['Grease Pencil', 79]];
const propertyTabs = [
  ['camera', 'Render'], ['layers', 'Render Layers'], ['scene', 'Scene'], ['world', 'World'],
  ['object', 'Object'], ['constraint', 'Constraints'], ['wrench', 'Modifiers'], ['mesh', 'Data'],
  ['material', 'Material'], ['texture', 'Texture'], ['particles', 'Particles'],
];
const transportButtons = ['first', 'rewind', 'back', 'play', 'forward', 'last'];

const Datablock = ({ icon, label, value }) => (
  <Group>
    <IconButton $dark $width={32} aria-label={`Browse ${label}`}>
      <Icon name={icon} />
      <Arrows />
    </IconButton>
    <TextInput $width={119} aria-label={label} defaultValue={value} />
    <IconButton aria-label={`Add ${label}`}><Icon name="plus" /></IconButton>
    <IconButton aria-label={`Delete ${label}`}><Icon name="close" /></IconButton>
  </Group>
);

const MenuList = ({ items }) => (
  <Menus>
    {items.map((item) => <MenuButton key={item}>{item}</MenuButton>)}
  </Menus>
);

const Title = () => (
  <TitleBar>
    <Icon name="blender" />
    <TitleText>{'Blender* [C:\\Users\\User\\Mis Documentos 2\\Trabajos\\CG\\Anjana.blend]'}</TitleText>
    <WindowButton aria-label="Minimize">
      <svg width="10" height="10"><path d="M0 4.5h10" stroke="#000" /></svg>
    </WindowButton>
    <WindowButton aria-label="Restore">
      <svg width="10" height="10"><path d="M.5 2.5h7v7h-7zM2.5 2V.5h7v7H8" fill="none" stroke="#000" /></svg>
    </WindowButton>
    <WindowButton $last aria-label="Close">
      <svg width="10" height="10"><path d="m0 0 10 10M10 0 0 10" stroke="#000" /></svg>
    </WindowButton>
  </TitleBar>
);

const ToolShelf = () => (
  <Shelf>
    <ShelfTop>
      <Tabs>
        {tabs.map(([name, length], i) => (
          <Tab key={name} $length={length} $active={i === 0}><span>{name}</span></Tab>
        ))}
      </Tabs>
      <Panels>
        <Panel $height={135}>
          <PanelHeader>
            <Triangle />
            Transform
            <Grip />
          </PanelHeader>
          <Stack $top={12}>
            {['Translate', 'Rotate', 'Scale', 'Shrink/Fatten', 'Push/Pull'].map((name, i) => (
              <ToolButton key={name} $first={i === 0}>{name}</ToolButton>
            ))}
          </Stack>
        </Panel>
        <Panel>
          <PanelHeader>
            <Triangle />
            Mesh Tools
            <Grip />
          </PanelHeader>
          <Caption $top={15}>Deform:</Caption>
          <Stack>
            <Split>
              <ToolButton $first>Slide Ed</ToolButton>
              <ToolButton $first>Vertex</ToolButton>
            </Split>
            <ToolButton>Noise</ToolButton>
            <ToolButton>Smooth Vertex</ToolButton>
            <ToolButton>Randomize</ToolButton>
          </Stack>
          <Caption $top={8}>Add:</Caption>
          <Stack>
            <Select label="Extrude type" value="Extrude" />
            <ToolButton>Extrude Region</ToolButton>
            <ToolButton aria-label="Extrude Individual" />
          </Stack>
        </Panel>
      </Panels>
      <ShelfBar $thumb={45} />
    </ShelfTop>
    <Operator>
      <PanelHeader>
        <Triangle />
        (De)select All
        <Grip />
      </PanelHeader>
      <Caption $top={15}>Action</Caption>
      <Group>
        <Select label="Action" value="Toggle" />
      </Group>
    </Operator>
  </Shelf>
);

const View3D = () => (
  <Viewport>
    <Mesh />
    <Overlay>User Ortho</Overlay>
    <Overlay $bottom>(1) Plane</Overlay>
    <AxisGizmo width="40" height="44" aria-hidden="true">
      <path d="M5 12v26" stroke="#0c0cc0" strokeWidth="2" />
      <path d="M10 36h10" stroke="#0ab00a" strokeWidth="2" />
      <path d="M5 37.5h10l9 1" stroke="#c00d0d" strokeWidth="2" fill="none" />
      <text x="6" y="10" fill="#1414c8">z</text>
      <text x="26" y="35" fill="#c00d0d">x</text>
      <text x="23" y="35" fill="#0ab00a">y</text>
    </AxisGizmo>
    <RegionToggle aria-label="Show properties region">
      <svg width="7" height="7"><path d="M3.5 0v7M0 3.5h7" stroke="#999" /></svg>
    </RegionToggle>
    <Corner />
  </Viewport>
);

const View3DHeader = () => (
  <Bar $height={27} $line>
    <EditorButton icon="view3d" label="Editor type: 3D View" />
    <MenuList items={['View', 'Select', 'Add', 'Mesh']} />
    <Group>
      <Select label="Mode" value="Edit Mode" icon="editmode" width={98} indent={1} />
    </Group>
    <Gap />
    <EditorButton icon="sphere" label="Viewport shading" />
    <Gap />
    <EditorButton icon="pivot" label="Pivot point" />
    <Gap />
    <Group>
      <IconButton $dark aria-label="Manipulators"><Icon name="manipulator" /></IconButton>
      <IconButton $dark $active aria-label="Translate"><Icon name="translate" /></IconButton>
      <IconButton $dark aria-label="Rotate"><Icon name="rotate" /></IconButton>
      <IconButton $dark aria-label="Scale"><Icon name="scale" /></IconButton>
      <Select label="Transform orientation" value="Global" width={71} />
    </Group>
    <Gap />
    <Group>
      <IconButton $pressed aria-label="Vertex select"><Icon name="vertex" /></IconButton>
      <IconButton aria-label="Edge select"><Icon name="edge" /></IconButton>
      <IconButton aria-label="Face select"><Icon name="face" /></IconButton>
    </Group>
    <Gap />
    <EditorButton icon="proportional" label="Proportional editing" />
    <Gap />
    <Group>
      <IconButton aria-label="Snap"><Icon name="magnet" /></IconButton>
      <IconButton $dark $width={32} aria-label="Snap element">
        <Icon name="increment" />
        <Arrows />
      </IconButton>
      <IconButton aria-label="Absolute grid snap"><Icon name="snapgrid" /></IconButton>
    </Group>
    <Gap />
    <Group>
      <IconButton aria-label="Auto merge"><Icon name="merge" /></IconButton>
    </Group>
    <Gap />
    <Group>
      <IconButton aria-label="Render image"><Icon name="renderView" /></IconButton>
      <IconButton aria-label="Render animation"><Icon name="clapper" /></IconButton>
    </Group>
    <Corner at="bottom" />
  </Bar>
);

const TimelineView = () => (
  <Timeline>
    <Track>
      {allFrames.map((frame) => (
        <Tick key={frame} $major={frame % 20 === 0} style={{ left: framePercent(frame) }} />
      ))}
      <Playhead style={{ left: framePercent(0.7) }} />
    </Track>
    <Ruler>
      {majorFrames.map((frame) => (
        <RulerLabel key={frame} style={{ left: labelPercent(frame) }}>{frame}</RulerLabel>
      ))}
    </Ruler>
    <Corner />
  </Timeline>
);

const TimelineHeader = () => (
  <Bar $height={25} $shade>
    <EditorButton icon="clock" label="Editor type: Timeline" />
    <MenuList items={['View', 'Marker', 'Frame', 'Playback']} />
    <Gap $size={2} />
    <Group>
      <IconButton aria-label="Use preview range"><Icon name="range" /></IconButton>
      <IconButton aria-label="Lock time cursor"><Icon name="lock" /></IconButton>
    </Group>
    <Gap />
    <Group $round>
      <NumberField label="Start:" value="1" width={115} />
      <NumberField label="End:" value="250" width={111} />
    </Group>
    <Gap />
    <Group $round>
      <NumberField label="Current frame" hideLabel value="1" width={88} />
    </Group>
    <Gap $size={16} />
    <Group>
      {transportButtons.map((name) => (
        <IconButton key={name} aria-label={name}><Icon name={name} /></IconButton>
      ))}
    </Group>
    <Gap />
    <Group>
      <Select label="Sync mode" value="No Sync" width={113} />
    </Group>
    <Gap $size={16} />
    <Group>
      <IconButton aria-label="Auto keyframe"><Icon name="record" /></IconButton>
    </Group>
    <Gap />
    <EditorButton icon="keyframe" label="Keyframe type" />
    <Gap />
    <Group>
      <KeyingSet>
        <Icon name="keyset" />
        <input aria-label="Keying set" />
      </KeyingSet>
      <IconButton aria-label="Insert keyframes"><Icon name="key" /></IconButton>
    </Group>
    <Corner at="bottom" />
  </Bar>
);

const OutlinerView = () => (
  <>
    <Bar>
      <EditorButton icon="outliner" label="Editor type: Outliner" />
      <MenuList items={['View', 'Search']} />
      <Gap $size={2} />
      <Group>
        <Select label="Display mode" value="All Scenes" width={125} />
      </Group>
      <Corner />
    </Bar>
    <Outliner>
      <OutlinerBody>
        <Tree>
          <TreeRow $selected $indent={2}>
            <Icon name="collapse" />
            <Branch />
            <Halo><Icon name="scene" /></Halo>
            <TreeName>Scene</TreeName>
          </TreeRow>
          <TreeRow $odd $indent={22}>
            <Icon name="expand" />
            <Gap $size={5} />
            <Icon name="layers" />
            <TreeName>RenderLayers</TreeName>
            <Pipe />
            <Halo><Icon name="layers" /></Halo>
          </TreeRow>
          <TreeRow $indent={41}>
            <Halo><Icon name="world" /></Halo>
            <TreeName>World</TreeName>
          </TreeRow>
          <TreeRow $odd $indent={22}>
            <Icon name="expand" />
            <Gap $size={5} />
            <Icon name="armature" />
            <Gap $size={44} />
            <Pipe />
            <Icon name="cameraData" />
            <Restrict>
              <Icon name="eye" />
              <Icon name="cursor" />
              <Icon name="camera" />
            </Restrict>
          </TreeRow>
        </Tree>
        <OutlinerBar $thumb={55} />
      </OutlinerBody>
      <OutlinerFoot $horizontal $thumb={79} />
      <Corner at="bottom" />
    </Outliner>
  </>
);

const Modifier = () => (
  <Card>
    <CardHeader>
      <PlainButton aria-label="Collapse"><Icon name="down" /></PlainButton>
      <Gap $size={9} />
      <Icon name="mirror" />
      <Gap $size={4} />
      <Group>
        <ModifierName $width={27} aria-label="Modifier name" defaultValue="Mir" />
      </Group>
      <Gap $size={8} />
      <Group>
        <IconButton $pressed $width={19} aria-label="Show in render"><Icon name="camera" /></IconButton>
        <IconButton $pressed $width={22} aria-label="Show in viewport"><Icon name="eye" /></IconButton>
        <IconButton $pressed $width={23} aria-label="Show in edit mode"><Icon name="editmode" /></IconButton>
        <IconButton $pressed $width={18} aria-label="Show on cage"><Icon name="mesh" /></IconButton>
      </Group>
      <Gap $size={8} />
      <Group>
        <IconButton $width={18} aria-label="Move up"><Icon name="up" /></IconButton>
        <IconButton $width={19} aria-label="Move down"><Icon name="down" /></IconButton>
      </Group>
      <Gap $size={7} />
      <PlainButton aria-label="Remove modifier"><Icon name="close" /></PlainButton>
    </CardHeader>
    <CardBody>
      <ButtonRow>
        <PushButton>Apply</PushButton>
        <PushButton>Copy</PushButton>
      </ButtonRow>
      <Options>
        <div>
          <OptionTitle>Axis:</OptionTitle>
          <CheckBox label="X" on />
          <CheckBox label="Y" />
          <CheckBox label="Z" />
        </div>
        <div>
          <OptionTitle>Options:</OptionTitle>
          <CheckBox label="Merge" on />
          <CheckBox label="Clipping" />
          <CheckBox label="Vertex Gro" on />
        </div>
        <div>
          <OptionTitle>Textures:</OptionTitle>
          <CheckBox label="U" />
          <CheckBox label="V" />
        </div>
      </Options>
      <Group $round>
        <NumberField label="Merge Limit:" value="0.001000" />
      </Group>
      <MirrorLabel htmlFor="mirror-object">Mirror Object:</MirrorLabel>
      <ObjectField>
        <Icon name="object" />
        <input id="mirror-object" />
        <PlainButton aria-label="Pick object"><Icon name="dropper" /></PlainButton>
      </ObjectField>
    </CardBody>
  </Card>
);

const Properties = () => (
  <>
    <Bar>
      <EditorButton icon="properties" label="Editor type: Properties" />
      <Gap $size={8} />
      <Group>
        {propertyTabs.map(([icon, label]) => (
          <PropertyTab key={icon} $active={icon === 'wrench'} aria-label={label}>
            <Icon name={icon} dim={icon !== 'wrench'} />
          </PropertyTab>
        ))}
      </Group>
      <Corner />
    </Bar>
    <Context>
      <Icon name="pin" />
      <Icon name="scene" />
      <Nudge $right $strong />
      <Gap $size={6} />
      <Icon name="object" />
      Plane
    </Context>
    <PropertyBody>
      <Group>
        <Select label="Add Modifier" value="Add Modifier" />
      </Group>
      <Modifier />
    </PropertyBody>
  </>
);

const App = () => (
  <Window>
    <GlobalStyle />
    <Title />
    <Bar $height={27} $shade $line>
      <EditorButton icon="info" label="Editor type: Info" />
      <MenuList items={['File', 'Render', 'Window', 'Help']} />
      <Datablock icon="layout" label="Screen" value="Default" />
      <Gap />
      <Datablock icon="scene" label="Scene" value="Scene" />
      <Gap $size={17} />
      <Group>
        <Select label="Render engine" value="Blender Render" width={109} />
      </Group>
      <Gap $size={18} />
      <Icon name="blender" />
      <Gap $size={10} />
      <Status>v2.79 | Verts:0/26 | Edges:0/25 | Faces:0/0 | Tris:0 | Mem:29.02M | Plane</Status>
      <Corner />
      <Corner at="bottom" />
    </Bar>
    <Body>
      <MainColumn>
        <ViewRow>
          <ToolShelf />
          <View3D />
        </ViewRow>
        <View3DHeader />
        <TimelineView />
        <TimelineHeader />
      </MainColumn>
      <SideColumn>
        <OutlinerView />
        <Properties />
      </SideColumn>
    </Body>
  </Window>
);

export default App;
